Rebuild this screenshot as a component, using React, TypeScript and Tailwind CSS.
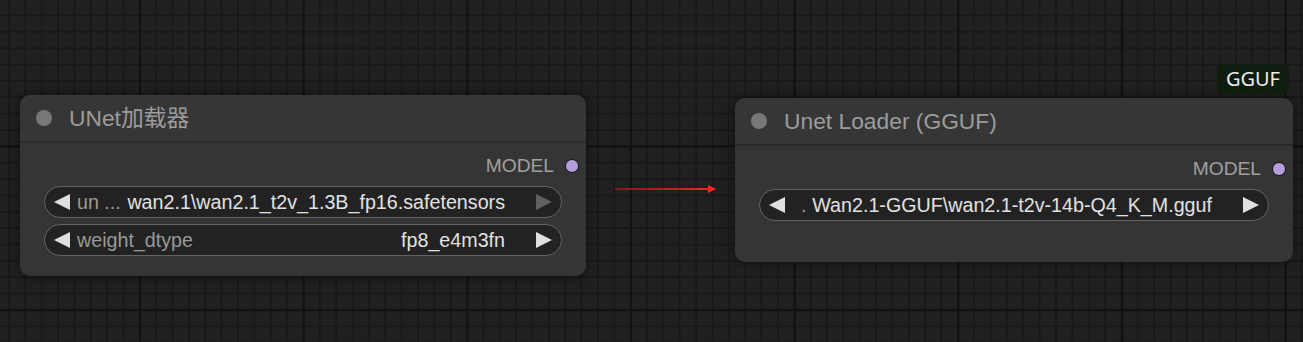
import React from 'react';

interface Widget {
  label: string;
  labelGap: number;
  value: string;
  rightDisabled?: boolean;
}

const Tri: React.FC<{ dir: 'left' | 'right'; color: string }> = ({ dir, color }) => (
  <svg width="16" height="16" viewBox="0 0 16 16" className="shrink-0">
    <polygon points={dir === 'left' ? '16,0 0,8 16,16' : '0,0 16,8 0,16'} fill={color} />
  </svg>
);

const ComboWidget: React.FC<{ w: Widget }> = ({ w }) => (
  <div className="mt-[6px] mx-6 h-8 rounded-full border border-[#636363] bg-[#222222] flex items-center pl-[9px] pr-[9px] text-[19.7px] leading-[24px]">
    <Tri dir="left" color="#e0e0e0" />
    <span className="text-[#9a9a9a] whitespace-pre shrink-0" style={{ marginLeft: w.labelGap }}>
      {w.label}
    </span>
    <span className="flex-1 text-right text-[#e2e2e2] whitespace-nowrap">{w.value}</span>
    <span className="ml-[31px] flex">
      <Tri dir="right" color={w.rightDisabled ? '#5f5f5f' : '#e0e0e0'} />
    </span>
  </div>
);

const NodeTitle: React.FC<{ title: string }> = ({ title }) => (
  <div className="h-12 flex items-center pl-4 border-b-2 border-[#2a2a2a] bg-[#363636] rounded-t-[10px]">
    <span className="w-4 h-4 rounded-full bg-[#787878] shrink-0" />
    <span className="ml-[17px] text-[22.8px] text-[#9c9c9c] leading-[28px]">{title}</span>
  </div>
);

const OutputSlot: React.FC = () => (
  <div className="mt-[9px] h-7 flex items-center justify-end pr-[7px]">
    <span className="text-[19.2px] text-[#a0a0a0] leading-[24px]">MODEL</span>
    <span className="ml-[11px] w-[14px] h-[14px] rounded-full bg-[#b39ddb] border border-[#121212]" />
  </div>
);

export default function App() {
  return (
    <div
      className="relative w-[1303px] h-[342px] overflow-hidden bg-[#202020] font-['Liberation_Sans','Noto_Sans_CJK_SC',sans-serif]
        bg-[image:linear-gradient(to_right,#111111_2px,transparent_2px),linear-gradient(to_bottom,#111111_2px,transparent_2px),linear-gradient(to_right,#181818_2px,transparent_2px),linear-gradient(to_bottom,#181818_2px,transparent_2px)]
        bg-[size:163.7px_163.7px,163.7px_163.7px,16.37px_16.37px,16.37px_16.37px]
        bg-[position:139px_0,0_145.5px,8px_0,0_14.5px]"
    >
      {/* UNet加载器 */}
      <div className="absolute left-[20px] top-[95px] w-[566px] h-[181px] rounded-[10px] bg-[#353535] shadow-[0_0_12px_rgba(0,0,0,0.55)]">
        <NodeTitle title="UNet加载器" />
        <OutputSlot />
        <ComboWidget
          w={{ label: 'un ...', labelGap: 7, value: 'wan2.1\\wan2.1_t2v_1.3B_fp16.safetensors', rightDisabled: true }}
        />
        <ComboWidget w={{ label: 'weight_dtype', labelGap: 7, value: 'fp8_e4m3fn' }} />
      </div>

      {/* link */}
      <svg className="absolute left-[612px] top-[183px]" width="108" height="12" viewBox="0 0 108 12">
        <defs>
          <linearGradient id="lnk" x1="0" x2="1" y1="0" y2="0">
            <stop offset="0" stopColor="#b81818" stopOpacity="0.6" />
            <stop offset="1" stopColor="#ff2222" />
          </linearGradient>
        </defs>
        <rect x="3" y="5" width="95" height="2" fill="url(#lnk)" />
        <polygon points="96,2 104,6 96,10" fill="#ff2222" />
      </svg>

      {/* Unet Loader (GGUF) */}
      <div className="absolute left-[735px] top-[98px] w-[558px] h-[164px] rounded-[10px] bg-[#353535] shadow-[0_0_12px_rgba(0,0,0,0.55)]">
        <div className="absolute right-[4px] bottom-[168px] h-[30px] px-[9px] rounded-[6px] bg-[#0f1d0f] flex items-center">
          <span className="text-[20px] text-[#ececec] font-['Noto_Sans',sans-serif] leading-[26px]">GGUF</span>
        </div>
        <NodeTitle title="Unet Loader (GGUF)" />
        <OutputSlot />
        <ComboWidget w={{ label: '.', labelGap: 16, value: 'Wan2.1-GGUF\\wan2.1-t2v-14b-Q4_K_M.gguf' }} />
      </div>
    </div>
  );
}
